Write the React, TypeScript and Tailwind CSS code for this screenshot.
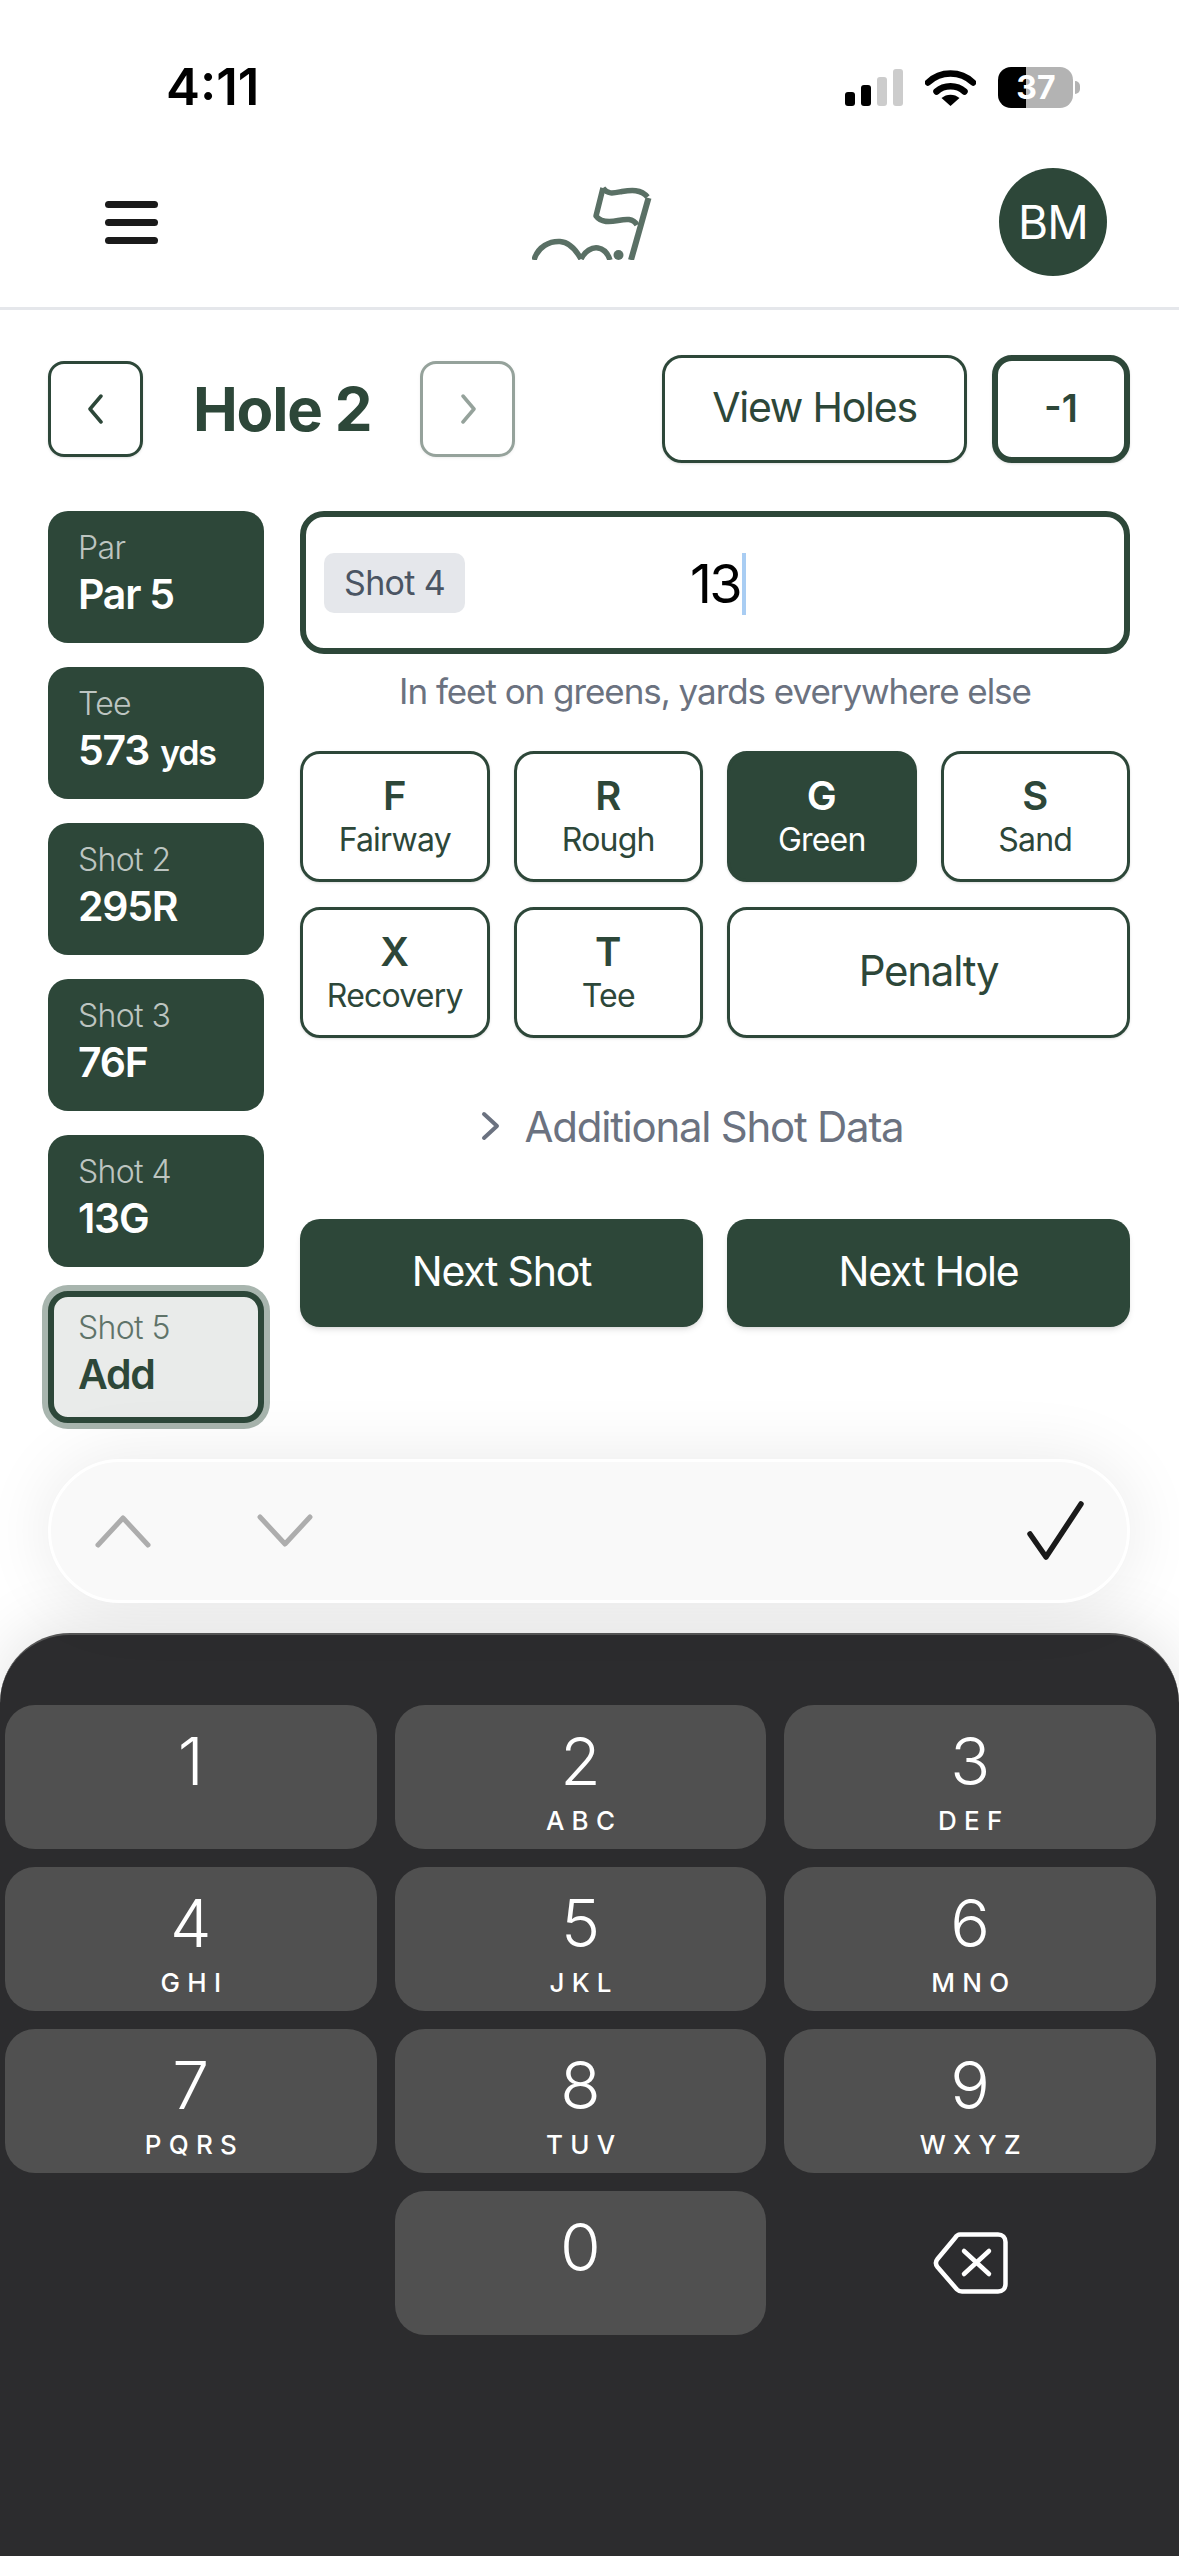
import React from 'react';

const GREEN = 'bg-[#2d4739]';

const shots = [
  { label: 'Par', value: 'Par 5' },
  { label: 'Tee', value: '573', unit: 'yds' },
  { label: 'Shot 2', value: '295R' },
  { label: 'Shot 3', value: '76F' },
  { label: 'Shot 4', value: '13G' },
];

const lies = [
  { key: 'F', name: 'Fairway' },
  { key: 'R', name: 'Rough' },
  { key: 'G', name: 'Green', active: true },
  { key: 'S', name: 'Sand' },
  { key: 'X', name: 'Recovery' },
  { key: 'T', name: 'Tee' },
];

const keys = [
  ['1', ''],
  ['2', 'ABC'],
  ['3', 'DEF'],
  ['4', 'GHI'],
  ['5', 'JKL'],
  ['6', 'MNO'],
  ['7', 'PQRS'],
  ['8', 'TUV'],
  ['9', 'WXYZ'],
];

const Digit: React.FC<{ n: string; letters?: string }> = ({ n, letters }) => (
  <div className="h-[144px] rounded-[30px] bg-[#505050] flex flex-col items-center text-white">
    <span className="mt-[24px] text-[66px] leading-[64px] font-light">{n}</span>
    {letters && <span className="mt-[14px] text-[26px] leading-[28px] font-medium tracking-[0.28em] ml-[0.28em]">{letters}</span>}
  </div>
);

export default function App() {
  return (
    <div className="relative w-[1179px] h-[2556px] overflow-hidden flex flex-col bg-white font-['Inter',sans-serif] text-[#2d4739]">
      {/* status bar */}
      <div className="h-[168px] shrink-0 flex items-start pt-[67px] pl-[166px]">
        <span className="text-[51px] leading-[40px] font-semibold text-black">4:11</span>
        <div className="ml-[586px] mt-[2px] flex items-end gap-[6px] h-[37px]">
          <div className="w-[10px] h-[14px] rounded-[3px] bg-black" />
          <div className="w-[10px] h-[21px] rounded-[3px] bg-black" />
          <div className="w-[10px] h-[29px] rounded-[3px] bg-[#cccccc]" />
          <div className="w-[10px] h-[37px] rounded-[3px] bg-[#cccccc]" />
        </div>
        <svg className="ml-[22px] mt-[2px]" width="51" height="37" viewBox="0 0 51 37" fill="none">
          <path d="M3 13.5C15.5 1.5 35.5 1.5 48 13.5" stroke="#000" strokeWidth="6.5" strokeLinecap="round" />
          <path d="M11.5 22.5C19 15.5 32 15.5 39.5 22.5" stroke="#000" strokeWidth="6.5" strokeLinecap="round" />
          <path d="M25.5 37L16.5 29C21.5 24.5 29.5 24.5 34.5 29Z" fill="#000" />
        </svg>
        <div className="relative ml-[22px] w-[75px] h-[41px] rounded-[13px] overflow-hidden flex">
          <div className="w-[28px] bg-black" />
          <div className="flex-1 bg-[#b3b3b3]" />
          <span className="absolute inset-0 flex items-center justify-center text-[32px] font-bold text-white">37</span>
        </div>
        <div className="ml-[2px] mt-[14px] w-[5px] h-[13px] rounded-r-full bg-[#b3b3b3]" />
      </div>

      {/* header */}
      <div className="h-[142px] shrink-0 pl-[105px] pr-[72px] border-b-[3px] border-[#e5e7eb]">
        <div className="h-[108px] flex items-center">
          <div className="w-[53px] flex flex-col gap-[11px]">
            <div className="h-[7px] rounded-full bg-[#1a1a1a]" />
            <div className="h-[7px] rounded-full bg-[#1a1a1a]" />
            <div className="h-[7px] rounded-full bg-[#1a1a1a]" />
          </div>
          <svg className="ml-[374px]" width="120" height="76" viewBox="32 26 120 76" fill="none" stroke="#5a7065" strokeWidth="5.500">
            <path d="M148.500 40L131 102" strokeWidth="6" />
            <path d="M103 30C108 37 114 35 122 33.500C131 32 141 31 147.500 39" strokeLinejoin="round" />
            <path d="M103 30L96 58C101 65 110 64 118 62.500C126 61 133 60 137 67" strokeLinejoin="round" />
            <path d="M34 102C38 88 50 83 60 83.500C69 84 76 92 81 101" />
            <path d="M81 101C85 93 92 89 98 90C104 91 108 96 110 102" />
            <circle cx="118.500" cy="97" r="5" fill="#5a7065" stroke="none" />
          </svg>
          <div className={`ml-auto w-[108px] h-[108px] rounded-full ${GREEN} flex items-center justify-center text-white text-[46px] tracking-[-0.02em]`}>BM</div>
        </div>
      </div>

      {/* main */}
      <div className="shrink-0 pt-[45px] pl-[48px] pr-[49px]">
        <div className="h-[108px] flex items-center mb-[48px]">
          <button className="w-[95px] h-[96px] rounded-[16px] border-[3px] border-[#2d4739] flex items-center justify-center shadow-sm">
            <svg width="22" height="30" viewBox="0 0 22 30" fill="none" stroke="#2d4739" strokeWidth="3.500" strokeLinecap="round" strokeLinejoin="round"><path d="M16 2L5 15L16 28" /></svg>
          </button>
          <h1 className="ml-[50px] text-[60px] leading-[72px] font-bold tracking-[-0.02em]">Hole 2</h1>
          <button className="ml-[49px] w-[95px] h-[96px] rounded-[16px] border-[3px] border-[#2d4739] opacity-50 flex items-center justify-center shadow-sm">
            <svg width="22" height="30" viewBox="0 0 22 30" fill="none" stroke="#2d4739" strokeWidth="3.500" strokeLinecap="round" strokeLinejoin="round"><path d="M6 2L17 15L6 28" /></svg>
          </button>
          <button className="ml-auto w-[305px] h-[108px] rounded-[20px] border-[3px] border-[#2d4739] text-[41px] tracking-[-0.03em] shadow-sm pb-[2px]">View Holes</button>
          <button className="ml-[25px] w-[138px] h-[108px] rounded-[20px] border-[6px] border-[#2d4739] text-[38px] font-semibold shadow-sm pb-[2px]">-1</button>
        </div>

        <div className="flex items-start gap-[36px]">
          <div className="w-[216px] shrink-0 flex flex-col gap-[24px]">
            {shots.map(s => (
              <div key={s.label} className={`h-[132px] rounded-[20px] ${GREEN} pl-[30px] pt-[17px] text-white`}>
                <div className="text-[32px] leading-[40px] font-light text-white/70 tracking-[-0.02em]">{s.label}</div>
                <div className="text-[41px] leading-[50px] font-semibold mt-[1px] tracking-[-0.03em]">
                  {s.value}
                  {s.unit && <span className="text-[34px] ml-[11px]">{s.unit}</span>}
                </div>
              </div>
            ))}
            <div className="h-[132px] rounded-[20px] border-[6px] border-[#2d4739] bg-[#e9ebea] pl-[24px] pt-[11px] shadow-[0_0_0_6px_#a8b5ae]">
              <div className="text-[32px] leading-[40px] font-light text-[#5f7369] tracking-[-0.02em]">Shot 5</div>
              <div className="text-[41px] leading-[50px] font-semibold mt-[1px] tracking-[-0.03em]">Add</div>
            </div>
          </div>

          <div className="flex-1 flex flex-col">
            <div className="relative h-[143px] rounded-[24px] border-[6px] border-[#2d4739] flex items-center pl-[18px]">
              <span className="h-[60px] w-[141px] rounded-[10px] bg-[#e5e7eb] flex items-center justify-center text-[34px] tracking-[-0.02em] text-[#4b5563]">Shot 4</span>
              <span className="absolute left-[384px] top-[36px] flex items-center text-[54px] leading-[62px] tracking-[-0.05em] text-black">
                13<span className="ml-[2px] w-[4px] h-[62px] bg-[#a9cdf3]" />
              </span>
            </div>
            <p className="mt-[14px] h-[46px] text-center text-[35px] leading-[46px] tracking-[-0.03em] text-[#6b7280]">In feet on greens, yards everywhere else</p>
            <div className="mt-[37px] grid grid-cols-4 gap-x-[24px] gap-y-[25px]">
              {lies.map(l => (
                <button
                  key={l.key}
                  className={`h-[131px] rounded-[20px] border-[3px] border-[#2d4739] flex flex-col items-center justify-center pt-[3px] shadow-sm ${l.active ? 'bg-[#2d4739] text-white' : ''}`}
                >
                  <span className="text-[40px] leading-[44px] font-semibold">{l.key}</span>
                  <span className="text-[32px] leading-[44px] tracking-[-0.025em]">{l.name}</span>
                </button>
              ))}
              <button className="col-span-2 h-[131px] rounded-[20px] border-[3px] border-[#2d4739] text-[42px] tracking-[-0.03em] shadow-sm pb-[4px]">Penalty</button>
            </div>
            <div className="mt-[64px] h-[48px] flex items-center justify-center pr-[46px] text-[#6b7280] text-[42px] tracking-[-0.03em]">
              <svg width="20" height="30" viewBox="0 0 20 30" fill="none" stroke="#6b7280" strokeWidth="4" strokeLinecap="round" strokeLinejoin="round"><path d="M3 3L16 15L3 27" /></svg>
              <span className="ml-[24px]">Additional Shot Data</span>
            </div>
            <div className="mt-[69px] flex gap-[24px]">
              <button className={`flex-1 h-[108px] rounded-[20px] ${GREEN} text-white text-[41px] tracking-[-0.03em] shadow-md pb-[2px]`}>Next Shot</button>
              <button className={`flex-1 h-[108px] rounded-[20px] ${GREEN} text-white text-[41px] tracking-[-0.03em] shadow-md pb-[2px]`}>Next Hole</button>
            </div>
          </div>
        </div>

        {/* keyboard accessory bar */}
        <div className="relative z-10 mt-[36px] h-[144px] rounded-full border-[3px] border-white bg-[#f9f9f9] flex items-center pl-[44px] pr-[43px] shadow-[0_0_70px_rgba(0,0,0,0.09)]">
          <svg width="56" height="36" viewBox="0 0 56 36" fill="none" stroke="#adadad" strokeWidth="5" strokeLinecap="round" strokeLinejoin="round"><path d="M3 32L28 5L53 32" /></svg>
          <svg className="ml-[106px]" width="56" height="36" viewBox="0 0 56 36" fill="none" stroke="#adadad" strokeWidth="5" strokeLinecap="round" strokeLinejoin="round"><path d="M3 4L28 31L53 4" /></svg>
          <svg className="ml-auto" width="60" height="60" viewBox="0 0 60 60" fill="none" stroke="#1a1a1a" strokeWidth="5.500" strokeLinecap="round" strokeLinejoin="round"><path d="M6 33L22 56L57 3" /></svg>
        </div>
      </div>

      {/* numeric keyboard */}
      <div className="mt-[30px] flex-1 rounded-t-[70px] border-t-[2px] border-[#555555] bg-[#2c2c2e] pt-[70px] pl-[5px] pr-[23px] shadow-[0_-10px_60px_rgba(0,0,0,0.1)]">
        <div className="grid grid-cols-3 gap-x-[18px] gap-y-[18px]">
          {keys.map(([n, letters]) => (
            <Digit key={n} n={n} letters={letters} />
          ))}
          <div />
          <Digit n="0" />
          <div className="flex items-center justify-center">
            <svg width="75" height="62" viewBox="0 0 75 62" fill="none" stroke="#fff" strokeWidth="4.500" strokeLinecap="round" strokeLinejoin="round">
              <path d="M27 2.500H65C69.500 2.500 72.500 5.500 72.500 10V52C72.500 56.500 69.500 59.500 65 59.500H29C27 59.500 25.500 59 24 57.500L4.500 35C2.500 32.500 2.500 29.500 4.500 27L22 6C23.500 3.500 25 2.500 27 2.500Z" />
              <path d="M31 19L56 42M56 19L31 42" />
            </svg>
          </div>
        </div>
      </div>
    </div>
  );
}
